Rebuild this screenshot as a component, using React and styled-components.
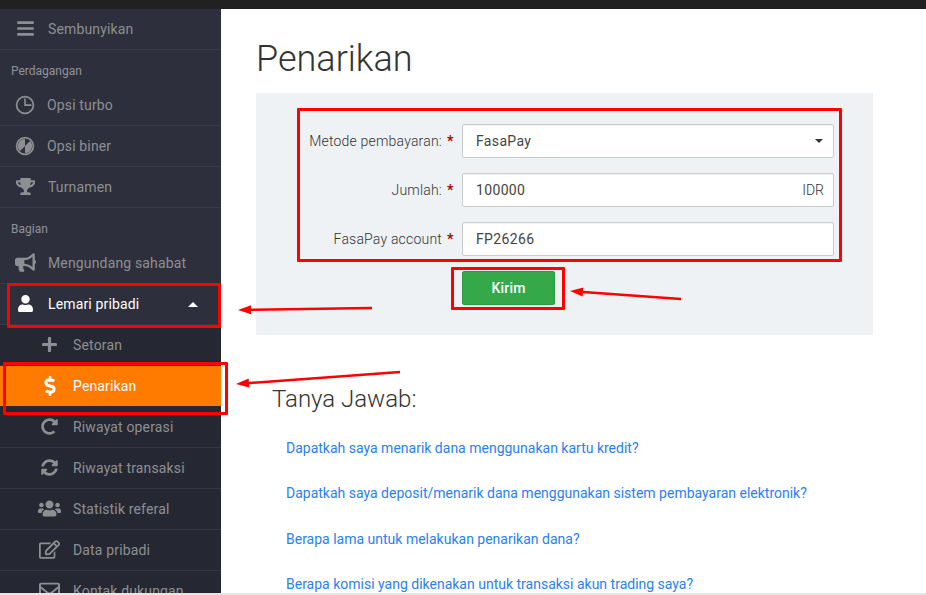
import React from 'react';
import styled, { createGlobalStyle } from 'styled-components';
import {
  FaBars, FaTrophy, FaBullhorn, FaUser, FaPlus, FaDollarSign, FaRedoAlt, FaSyncAlt,
  FaUsers, FaRegEdit, FaRegEnvelope,
} from 'react-icons/fa';

const GlobalStyle = createGlobalStyle`
  html, body {
    margin: 0;
    padding: 0;
    height: 595px;
    overflow: hidden;
    background: #fff;
    font-family: Roboto, "Liberation Sans", sans-serif;
  }
`;

const Page = styled.div`
  position: relative;
  width: 926px;
  height: 595px;
  display: flex;
  flex-direction: column;
  overflow: hidden;
`;

const TopBar = styled.div`
  height: 9px;
  flex: none;
  background: #212121;
`;

const Body = styled.div`
  flex: 1;
  min-height: 0;
  display: flex;
  overflow: hidden;
`;

const BottomEdge = styled.div`
  height: 2px;
  flex: none;
  background: #e6e6e6;
`;

const Sidebar = styled.nav`
  width: 221px;
  flex: none;
  background: #2d303c;
`;

const SectionLabel = styled.div`
  height: 35px;
  box-sizing: border-box;
  padding: 13px 0 0 11px;
  font-size: 12px;
  line-height: 16px;
  color: #8f9299;
`;

const Row = styled.div`
  height: 41px;
  box-sizing: border-box;
  display: flex;
  align-items: center;
  padding-bottom: 1px;
  border-bottom: 1px solid ${p => (p.$sub ? '#343743' : '#383b47')};
  background: ${p => (p.$active ? '#ff7b00' : p.$sub ? '#252832' : 'transparent')};
  color: ${p => (p.$active || p.$open ? '#fff' : '#8e8f92')};
  font-size: 14px;
  letter-spacing: 0.15px;
  ${p => p.$active && 'border-bottom-color: #252832;'}
`;

const IconSlot = styled.span`
  width: ${p => (p.$sub ? '73px' : '48px')};
  flex: none;
  display: flex;
  justify-content: center;
  padding-right: ${p => (p.$sub ? '0' : '0')};
  box-sizing: border-box;
  padding-right: ${p => (p.$sub ? '0' : '0')};
  & > * {
    position: relative;
    left: ${p => (p.$sub ? '13px' : '1px')};
    transform: translateX(${p => (p.$sub ? '0' : '0')});
  }
`;

const RowText = styled.span`
  flex: 1;
  margin-left: ${p => p.$tight ? '-1px' : '0'};
`;

const Caret = styled.span`
  width: 0;
  height: 0;
  margin-right: 23px;
  margin-bottom: -1px;
  border-left: 5px solid transparent;
  border-right: 5px solid transparent;
  border-bottom: 5px solid #fff;
`;

const Main = styled.main`
  flex: 1;
  min-width: 0;
  padding-left: 35px;
`;

const Title = styled.h1`
  margin: 0;
  height: 84px;
  padding-top: 28px;
  box-sizing: border-box;
  font-size: 36px;
  line-height: 44px;
  font-weight: 300;
  color: #333;
`;

const Panel = styled.section`
  width: 617px;
  height: 242px;
  box-sizing: border-box;
  padding-top: 31px;
  background: #eff2f5;
`;

const FormRow = styled.div`
  display: flex;
  align-items: center;
  margin-bottom: 15px;
`;

const Label = styled.label`
  width: 186px;
  flex: none;
  text-align: right;
  font-size: 14px;
  font-weight: 300;
  letter-spacing: 0.2px;
  color: #333;
`;

const Star = styled.span`
  width: 20px;
  flex: none;
  box-sizing: border-box;
  padding-left: 5px;
  font-size: 14px;
  font-weight: 700;
  color: #a00;
`;

const Field = styled.div`
  width: 372px;
  height: 34px;
  box-sizing: border-box;
  display: flex;
  align-items: center;
  justify-content: space-between;
  padding: 0 9px 0 13px;
  background: #fff;
  border: 1px solid #ccc;
  border-radius: 2px;
  box-shadow: inset 0 1px 1px rgba(0, 0, 0, 0.05);
  font-size: 14px;
  letter-spacing: 0.35px;
  color: #444;
`;

const Addon = styled.span`
  font-weight: 300;
  color: #333;
  letter-spacing: 0;
`;

const SelectCaret = styled.span`
  width: 0;
  height: 0;
  margin-right: 1px;
  border-left: 4px solid transparent;
  border-right: 4px solid transparent;
  border-top: 4px solid #333;
`;

const ButtonRow = styled.div`
  padding-left: 206px;
`;

const SubmitButton = styled.button`
  width: 93px;
  height: 34px;
  display: block;
  border: 1px solid #2f9c44;
  border-radius: 2px;
  background: #35a94a;
  color: #fff;
  font: 500 14px Roboto, "Liberation Sans", sans-serif;
  letter-spacing: 0.2px;
`;

const FaqTitle = styled.h2`
  margin: 49px 0 0 16px;
  font-size: 24px;
  line-height: 30px;
  font-weight: 300;
  color: #333;
`;

const FaqList = styled.div`
  margin: 24px 0 0 30px;
`;

const FaqLink = styled.a`
  display: block;
  height: 45.3px;
  font-size: 14px;
  line-height: 20px;
  color: #2b80f2;
  text-decoration: none;
`;

const RedBox = styled.div`
  position: absolute;
  left: ${p => p.$x}px;
  top: ${p => p.$y}px;
  width: ${p => p.$w}px;
  height: ${p => p.$h}px;
  box-sizing: border-box;
  border: 3px solid #f00;
  border-radius: 1px;
  pointer-events: none;
`;

const ArrowLayer = styled.svg`
  position: absolute;
  left: 0;
  top: 0;
  pointer-events: none;
`;

const TurboClock = ({ size = 20 }) => (
  <svg width={size} height={size} viewBox="0 0 20 20">
    <circle cx="10" cy="10" r="8.4" fill="none" stroke="currentColor" strokeWidth="1.7" />
    <path d="M9.2 3.6h1.6v5.7h5.6v1.6H9.2z" fill="currentColor" />
  </svg>
);

const BinaryClock = ({ size = 20 }) => (
  <svg width={size} height={size} viewBox="0 0 20 20">
    <circle cx="10" cy="10" r="8.4" fill="none" stroke="currentColor" strokeWidth="1.7" />
    <path d="M10 3v7l-5 5a7 7 0 0 1 5-12z" fill="currentColor" transform="rotate(180 10 10) scale(1)" />
    <path d="M10 10V3a7 7 0 0 0-5 12z" fill="currentColor" />
  </svg>
);

const Arrow = ({ from, to }) => {
  const dx = to[0] - from[0];
  const dy = to[1] - from[1];
  const len = Math.hypot(dx, dy);
  const ux = dx / len;
  const uy = dy / len;
  const bx = to[0] - ux * 13;
  const by = to[1] - uy * 13;
  const head = `${to[0]},${to[1]} ${bx - uy * 4.5},${by + ux * 4.5} ${bx + uy * 4.5},${by - ux * 4.5}`;
  return (
    <>
      <line x1={from[0]} y1={from[1]} x2={bx} y2={by} stroke="#f00" strokeWidth="2.5" />
      <polygon points={head} fill="#f00" />
    </>
  );
};

const faq = [
  'Dapatkah saya menarik dana menggunakan kartu kredit?',
  'Dapatkah saya deposit/menarik dana menggunakan sistem pembayaran elektronik?',
  'Berapa lama untuk melakukan penarikan dana?',
  'Berapa komisi yang dikenakan untuk transaksi akun trading saya?',
];

const App = () => (
  <Page>
    <GlobalStyle />
    <TopBar />
    <Body>
      <Sidebar>
        <Row>
          <IconSlot><FaBars size={19} /></IconSlot>
          <RowText>Sembunyikan</RowText>
        </Row>
        <SectionLabel>Perdagangan</SectionLabel>
        <Row>
          <IconSlot><TurboClock /></IconSlot>
          <RowText $tight>Opsi turbo</RowText>
        </Row>
        <Row>
          <IconSlot><BinaryClock /></IconSlot>
          <RowText $tight>Opsi biner</RowText>
        </Row>
        <Row>
          <IconSlot><FaTrophy size={19} /></IconSlot>
          <RowText>Turnamen</RowText>
        </Row>
        <SectionLabel>Bagian</SectionLabel>
        <Row>
          <IconSlot><FaBullhorn size={21} /></IconSlot>
          <RowText>Mengundang sahabat</RowText>
        </Row>
        <Row $open>
          <IconSlot><FaUser size={17} /></IconSlot>
          <RowText>Lemari pribadi</RowText>
          <Caret />
        </Row>
        <Row $sub>
          <IconSlot $sub><FaPlus size={17} /></IconSlot>
          <RowText>Setoran</RowText>
        </Row>
        <Row $sub $active>
          <IconSlot $sub><FaDollarSign size={20} /></IconSlot>
          <RowText>Penarikan</RowText>
        </Row>
        <Row $sub>
          <IconSlot $sub><FaRedoAlt size={17} /></IconSlot>
          <RowText>Riwayat operasi</RowText>
        </Row>
        <Row $sub>
          <IconSlot $sub><FaSyncAlt size={17} /></IconSlot>
          <RowText>Riwayat transaksi</RowText>
        </Row>
        <Row $sub>
          <IconSlot $sub><FaUsers size={23} /></IconSlot>
          <RowText>Statistik referal</RowText>
        </Row>
        <Row $sub>
          <IconSlot $sub><FaRegEdit size={21} /></IconSlot>
          <RowText>Data pribadi</RowText>
        </Row>
        <Row $sub>
          <IconSlot $sub><FaRegEnvelope size={21} /></IconSlot>
          <RowText>Kontak dukungan</RowText>
        </Row>
      </Sidebar>
      <Main>
        <Title>Penarikan</Title>
        <Panel>
          <FormRow>
            <Label>Metode pembayaran:</Label>
            <Star>*</Star>
            <Field>FasaPay<SelectCaret /></Field>
          </FormRow>
          <FormRow>
            <Label>Jumlah:</Label>
            <Star>*</Star>
            <Field>100000<Addon>IDR</Addon></Field>
          </FormRow>
          <FormRow>
            <Label>FasaPay account</Label>
            <Star>*</Star>
            <Field>FP26266</Field>
          </FormRow>
          <ButtonRow><SubmitButton>Kirim</SubmitButton></ButtonRow>
        </Panel>
        <FaqTitle>Tanya Jawab:</FaqTitle>
        <FaqList>
          {faq.map(q => <FaqLink key={q}>{q}</FaqLink>)}
        </FaqList>
      </Main>
    </Body>
    <BottomEdge />

    <RedBox $x={297} $y={108} $w={545} $h={154} />
    <RedBox $x={451} $y={267} $w={114} $h={43} />
    <RedBox $x={7} $y={283} $w={214} $h={45} />
    <RedBox $x={3} $y={362} $w={225} $h={53} />
    <ArrowLayer width="926" height="595">
      <Arrow from={[372, 308]} to={[238, 310]} />
      <Arrow from={[681, 299]} to={[570, 291]} />
      <Arrow from={[400, 372]} to={[236, 384]} />
    </ArrowLayer>
  </Page>
);

export default App;
